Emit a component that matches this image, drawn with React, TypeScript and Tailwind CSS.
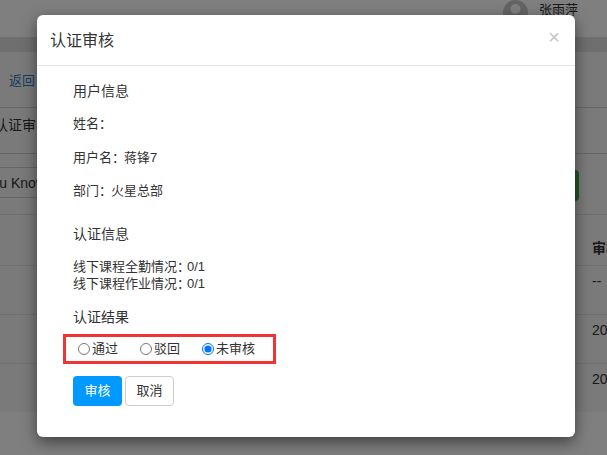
import React from 'react';

const fontStack = "font-['Liberation_Sans','Noto_Sans_CJK_SC',sans-serif]";

const tableRows = ['--', '2021', '2021'];

const Background: React.FC = () => {
  return (
    <div className="w-[607px] h-[455px] overflow-hidden bg-[#fff] text-[#333] text-[14px]">
      <div className="h-[37px] flex justify-end pr-[29px]">
        <svg className="w-[25px] h-[25px] mr-[11px]" viewBox="0 0 25 25">
          <circle cx="12.5" cy="12.5" r="12.5" fill="#c8c8c8" />
          <circle cx="12.5" cy="9" r="5" fill="#ffffff" />
          <path d="M4 23c1-6 4-8 8.500-8s7.500 2 8.500 8z" fill="#ffffff" />
        </svg>
        <span className="text-[13px] leading-[20px] whitespace-nowrap">张雨萍</span>
      </div>
      <div className="h-[15px] bg-[#dedede]" />
      <div className="h-[360px] bg-[#f5f5f5]">
        <div className="h-[56px] pl-[9px] pt-[19px] border-b border-[#ccc] text-[#337ab7] text-[13px] leading-[20px]">返回</div>
        <div className="h-[46px] border-b border-[#ccc] pt-[7px] -ml-[6px] leading-[20px] whitespace-nowrap">认证审核</div>
        <div className="h-[61px] border-b border-[#ddd] pt-[13px] flex justify-between">
          <div className="h-[31px] w-[200px] -ml-[100px] border-y border-[#ccc] text-right pr-[54px] leading-[31px]">u Know</div>
          <div className="h-[31px] w-[40px] mt-[3px] rounded-[4px] bg-[#3fae42] mr-[28px]" />
        </div>
        <div className="h-[50px] flex justify-end items-end pb-[6px] font-bold">
          <span className="w-[15px] overflow-hidden whitespace-nowrap">审核</span>
        </div>
        {tableRows.map((value, idx) => (
          <div key={idx} className="h-[49px] border-t border-[#e0e0e0] pl-[592px] pt-[5px] whitespace-nowrap leading-[20px]">
            {value}
          </div>
        ))}
      </div>
    </div>
  );
};

const App: React.FC = () => {
  return (
    <div className={`relative w-[607px] h-[455px] overflow-hidden ${fontStack}`}>
      <Background />
      <div className="absolute inset-0 bg-black/50" />
      <div className="absolute left-[37px] top-[15px] w-[538px] h-[422px] rounded-[6px] bg-white shadow-[0_5px_15px_rgba(0,0,0,0.5)] text-[#333] text-[13px]">
        <div className="relative h-[51px] border-b border-[#e5e5e5] pl-[13px] pt-[15px] text-[16px] leading-[22px]">
          认证审核
          <span className="absolute right-[15px] top-[12px] text-[#c4c4c4] text-[20px] leading-[20px]">×</span>
        </div>
        <div className="pl-[36px] leading-[20px]">
          <div className="pt-[15px] text-[14px]">用户信息</div>
          <div className="mt-[13px]">姓名：</div>
          <div className="mt-[14px]">用户名<span className="tracking-[-1px]">：</span>蒋锋7</div>
          <div className="mt-[13px]">部门<span className="tracking-[-1px]">：</span>火星总部</div>
          <div className="mt-[23px] text-[14px]">认证信息</div>
          <div className="mt-[14px] leading-[17px]">线下课程全勤情况<span className="tracking-[-3px]">：</span>0/1</div>
          <div className="leading-[17px]">线下课程作业情况<span className="tracking-[-3px]">：</span>0/1</div>
          <div className="mt-[15px] text-[14px]">认证结果</div>
          <div className="-ml-[10px] mt-[7px] w-[213px] h-[30px] border-[3px] border-[#f33333] pl-[12px] flex items-center">
            <label className="flex items-center w-[62px]">
              <input type="radio" name="result" className="m-0 mr-[2px] w-[12px] h-[12px]" />
              通过
            </label>
            <label className="flex items-center w-[62px]">
              <input type="radio" name="result" className="m-0 mr-[2px] w-[12px] h-[12px]" />
              驳回
            </label>
            <label className="flex items-center">
              <input type="radio" name="result" defaultChecked className="m-0 mr-[2px] w-[12px] h-[12px]" />
              未审核
            </label>
          </div>
          <div className="mt-[12px] flex gap-[3px]">
            <button className="w-[49px] h-[30px] rounded-[4px] bg-[#0099ff] text-white">审核</button>
            <button className="w-[49px] h-[30px] rounded-[4px] border border-[#ccc] bg-white text-[#333]">取消</button>
          </div>
        </div>
      </div>
    </div>
  );
};

export default App;
